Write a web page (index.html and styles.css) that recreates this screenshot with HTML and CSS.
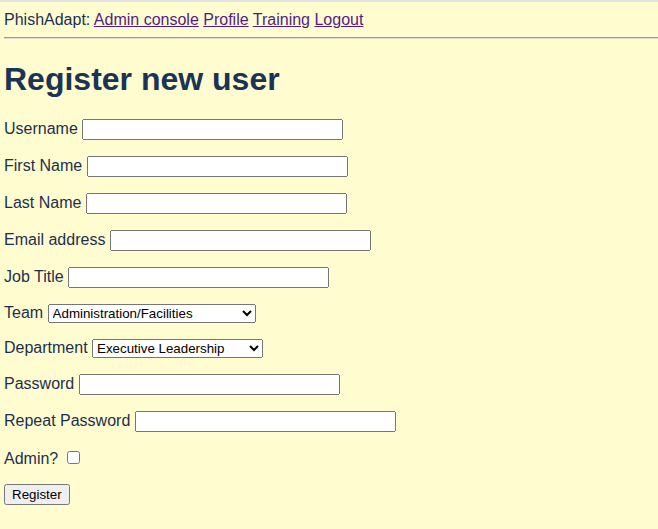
FILE: index.html
```html
<!DOCTYPE html>
<html>
<head>
<meta charset="utf-8">
<title>Register new user</title>
<link rel="stylesheet" href="styles.css">
</head>
<body>
<div class="nav">PhishAdapt: <a href="#" class="link">Admin console</a> <a href="#" class="link">Profile</a> <a href="#" class="link">Training</a> <a href="#" class="link">Logout</a></div>
<hr class="rule">
<h1 class="title">Register new user</h1>
<form class="form">
  <p class="row"><label>Username</label> <input class="field" type="text"></p>
  <p class="row"><label>First Name</label> <input class="field" type="text"></p>
  <p class="row"><label>Last Name</label> <input class="field" type="text"></p>
  <p class="row"><label>Email address</label> <input class="field" type="text"></p>
  <p class="row"><label>Job Title</label> <input class="field" type="text"></p>
  <p class="row"><label>Team</label> <select class="pick team"><option>Administration/Facilities</option></select></p>
  <p class="row"><label>Department</label> <select class="pick dept"><option>Executive Leadership</option></select></p>
  <p class="row"><label>Password</label> <input class="field" type="password"></p>
  <p class="row"><label>Repeat Password</label> <input class="field" type="password"></p>
  <p class="row"><label>Admin?</label> <input class="check" type="checkbox"></p>
  <p class="row"><input class="btn" type="submit" value="Register"></p>
</form>
</body>
</html>
```
FILE: styles.css
```css
html {
  background: #fffdd0;
  border-top: 2px solid #e2e2e2;
}
body {
  margin: 9px 0 0 4px;
  font-family: "Liberation Sans", Arial, sans-serif;
  font-size: 16px;
  color: #1d2f4e;
  background: #fffdd0;
}
.link {
  color: #551a8b;
}
.rule {
  margin: 8px 0;
  border: 0;
  border-top: 1px solid #9a9a9a;
  border-bottom: 1px solid #dcdcd0;
  height: 0;
}
.title {
  font-size: 32px;
  color: #1b3355;
  margin: 22px 0 21px;
}
.row {
  margin: 16px 0;
}
.field {
  width: 261px;
  box-sizing: border-box;
  font-family: "Liberation Sans", Arial, sans-serif;
  font-size: 13.33px;
}
.pick {
  font-family: "Liberation Sans", Arial, sans-serif;
  font-size: 13.33px;
  color: #000;
}
.team { width: 208px; }
.dept { width: 171px; }
.btn {
  font-family: "Liberation Sans", Arial, sans-serif;
  font-size: 13.33px;
}
```
